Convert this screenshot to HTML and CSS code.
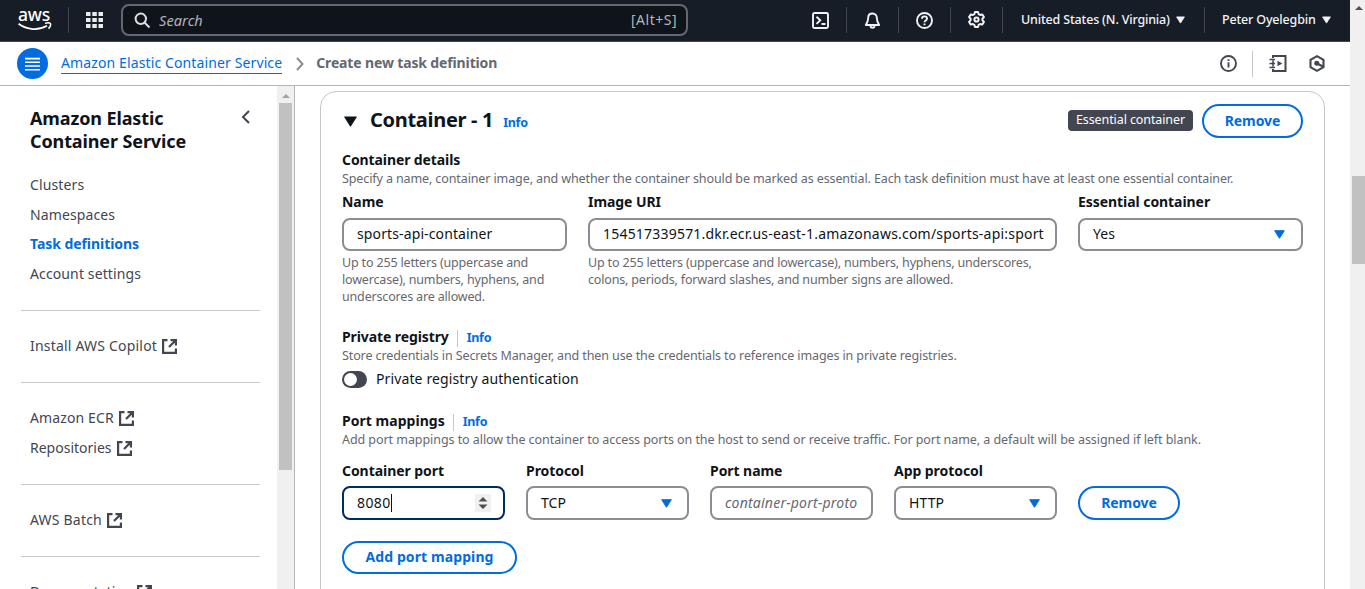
FILE: index.html
```
<!DOCTYPE html>
<html lang="en">
<head>
<meta charset="utf-8">
<title>Create new task definition</title>
<link rel="stylesheet" href="styles.css">
</head>
<body>
<svg width="0" height="0" class="defs">
  <symbol id="ext" viewBox="0 0 15 15"><path d="M5.500 1.100H1.100v12.800h12.800V9.500M8.500 1.100h5.400v5.400M13.500 1.500L7 8" fill="none" stroke="currentColor" stroke-width="2.200"/></symbol>
  <symbol id="caret" viewBox="0 0 11 9"><path d="M.7.7h9.600L5.500 8.300z" fill="currentColor" stroke="currentColor" stroke-width="1" stroke-linejoin="round"/></symbol>
</svg>
<div class="app">
  <div class="page">
    <header class="topbar">
      <div class="logo">
        <span class="logo-text">aws</span>
        <svg width="34" height="9" viewBox="0 0 34 9" fill="none" stroke="#fff"><path d="M.5 1.800c8.500 6.300 20 7 28.500 2" stroke-width="1.800"/><path d="M27 1.400c2-.7 4.200-.7 5.300-.1.500 1-.1 3.600-1.800 5.300" stroke-width="1.500"/></svg>
      </div>
      <i class="vr vr-logo"></i>
      <svg class="apps" width="17" height="16" viewBox="0 0 17 16" fill="#e9ebed"><path d="M0 0h4.500v4H0zM6.300 0h4.500v4H6.300zM12.500 0H17v4h-4.500zM0 6h4.500v4H0zM6.300 6h4.500v4H6.300zM12.500 6H17v4h-4.500zM0 12h4.500v4H0zM6.300 12h4.500v4H6.300zM12.500 12H17v4h-4.500z"/></svg>
      <div class="search">
        <svg width="17" height="17" viewBox="0 0 17 17" fill="none" stroke="#dedee3" stroke-width="2"><circle cx="6.800" cy="6.800" r="5.200"/><path d="M10.500 10.500l5 5"/></svg>
        <span class="search-ph">Search</span>
        <span class="search-key">[Alt+S]</span>
      </div>
      <div class="tools">
        <div class="tool"><svg width="17" height="17" viewBox="0 0 17 17" fill="none" stroke="#f3f3f7" stroke-width="1.900"><rect x="1" y="1" width="15" height="15" rx="1.500"/><path d="M4.500 4.700l3.800 3.600-3.800 3.600M9.500 12h4"/></svg></div>
        <div class="tool"><svg width="17" height="17" viewBox="0 0 17 17" fill="none" stroke="#f3f3f7" stroke-width="1.900"><path d="M8.500 1.500c-2.900 0-4.300 2-4.300 4.300 0 3.200-.7 4.700-2.400 7.200h13.400c-1.700-2.500-2.400-4-2.400-7.200 0-2.300-1.400-4.300-4.300-4.300z" stroke-linejoin="round"/><path d="M6.500 13.500c0 3 4 3 4 0"/></svg></div>
        <div class="tool"><svg width="17" height="17" viewBox="0 0 17 17" fill="none" stroke="#f3f3f7" stroke-width="1.900"><circle cx="8.500" cy="8.500" r="7.500"/><path d="M6 6.700c0-3.100 5-3.100 5 0 0 1.700-2.500 1.800-2.500 3.600M8.500 11.500v1.700"/></svg></div>
        <div class="tool"><svg class="gear" width="17" height="17" viewBox="0 0 17 17" fill="none" stroke="#f3f3f7" stroke-width="2" stroke-linejoin="round"><path d="M7 1h3l.6 2.100 1.500.9 2.200-.6 1.600 2.700L14.400 7.700v1.600l1.500 1.600-1.600 2.700-2.200-.6-1.500.9L10 16H7l-.6-2.100-1.500-.9-2.200.6-1.600-2.700 1.500-1.600V7.700L1.100 6.100l1.600-2.700 2.200.6 1.500-.9z"/><circle cx="8.500" cy="8.500" r="2.100"/></svg></div>
      </div>
      <div class="menu region"><span>United States (N. Virginia)</span><svg class="mini" width="9" height="8"><use href="#caret"/></svg></div>
      <i class="vr"></i>
      <div class="menu user"><span>Peter Oyelegbin</span><svg class="mini" width="9" height="8"><use href="#caret"/></svg></div>
    </header>

    <nav class="crumbs">
      <div class="burger"><svg width="15" height="14" viewBox="0 0 15 14" fill="#fff"><path d="M0 .8h15v1.600H0zM0 4.500h15v1.600H0zM0 8.200h15v1.600H0zM0 12h15v1.600H0z"/></svg></div>
      <a class="crumb-link">Amazon Elastic Container Service</a>
      <svg class="crumb-sep" width="8" height="14" viewBox="0 0 8 14" fill="none" stroke="#8c8c94" stroke-width="2"><path d="M1 1l5.500 6L1 13"/></svg>
      <span class="crumb-current">Create new task definition</span>
      <div class="crumb-tools">
        <svg width="17" height="17" viewBox="0 0 17 17" fill="none" stroke="#424650" stroke-width="1.900"><circle cx="8.500" cy="8.500" r="7.500"/><path d="M8.500 7.300v5.200M8.500 4.300v1.800"/></svg>
        <i class="vr-light"></i>
        <svg width="18" height="17" viewBox="0 0 18 17" fill="none" stroke="#424650" stroke-width="2"><path d="M4 3V1h12.500v15H4v-2"/><path d="M4 5.500v6M.5 4.500h5.500M.5 8.500h5.500M.5 12.500h5.500" stroke-width="1.600"/><path d="M8.500 5.800v5.400l4.800-2.700z" fill="#424650" stroke="none"/></svg>
        <svg class="hex" width="16" height="17" viewBox="0 0 16 17" fill="none" stroke="#424650" stroke-width="2.100"><path d="M8 1.200l6.500 3.600v7.400L8 15.800l-6.500-3.600V4.800z"/><circle cx="7.800" cy="8.200" r="2.500" fill="#424650" stroke="none"/><path d="M8 8.500l6 3"/></svg>
      </div>
    </nav>

    <div class="body">
      <aside class="side">
        <div class="side-content">
          <div class="side-head">
            <h2>Amazon Elastic<br>Container Service</h2>
            <svg width="9" height="14" viewBox="0 0 9 14" fill="none" stroke="#424650" stroke-width="2"><path d="M8 1L2 7l6 6"/></svg>
          </div>
          <ul class="links">
            <li>Clusters</li>
            <li>Namespaces</li>
            <li class="active">Task definitions</li>
            <li>Account settings</li>
          </ul>
          <ul class="links ruled"><li class="wide">Install AWS Copilot<svg class="ext"><use href="#ext"/></svg></li></ul>
          <ul class="links ruled"><li>Amazon ECR<svg class="ext"><use href="#ext"/></svg></li><li class="tight">Repositories<svg class="ext"><use href="#ext"/></svg></li></ul>
          <ul class="links ruled"><li class="wide">AWS Batch<svg class="ext"><use href="#ext"/></svg></li></ul>
          <ul class="links ruled"><li class="tight">Documentation<svg class="ext"><use href="#ext"/></svg></li></ul>
        </div>
        <div class="side-scroll"><i class="arrow-up dim"></i><i class="thumb"></i></div>
      </aside>

      <main class="main">
        <section class="card">
          <div class="card-head">
            <svg class="fold" width="13" height="11"><use href="#caret"/></svg>
            <h1>Container - 1</h1>
            <a class="info">Info</a>
            <span class="badge">Essential container</span>
            <button class="btn btn-remove">Remove</button>
          </div>

          <h3 class="sub details">Container details</h3>
          <p class="hint">Specify a name, container image, and whether the container should be marked as essential. Each task definition must have at least one essential container.</p>
          <div class="grid detail-grid">
            <div class="field"><label>Name</label><div class="input"><span>sports-api-container</span></div><p class="hint">Up to 255 letters (uppercase and<br>lowercase), numbers, hyphens, and<br>underscores are allowed.</p></div>
            <div class="field"><label>Image URI</label><div class="input"><span class="uri">154517339571.dkr.ecr.us-east-1.amazonaws.com/sports-api:sport</span></div><p class="hint">Up to 255 letters (uppercase and lowercase), numbers, hyphens, underscores,<br>colons, periods, forward slashes, and number signs are allowed.</p></div>
            <div class="field"><label>Essential container</label><div class="input select"><span>Yes</span><svg class="caret" width="11" height="9"><use href="#caret"/></svg></div></div>
          </div>

          <div class="sub-row"><h3 class="sub">Private registry</h3><a class="info split">Info</a></div>
          <p class="hint">Store credentials in Secrets Manager, and then use the credentials to reference images in private registries.</p>
          <div class="toggle-row"><i class="toggle"></i><span>Private registry authentication</span></div>

          <div class="sub-row ports"><h3 class="sub">Port mappings</h3><a class="info split">Info</a></div>
          <p class="hint port-hint">Add port mappings to allow the container to access ports on the host to send or receive traffic. For port name, a default will be assigned if left blank.</p>
          <div class="grid port-grid">
            <div class="field"><label>Container port</label><div class="input focus"><span class="typed">8080</span><div class="spin"><svg width="10" height="12" viewBox="0 0 10 12" fill="#505050"><path d="M5 0l4.500 4.500h-9zM5 12l4.500-4.500h-9z"/></svg></div></div></div>
            <div class="field"><label>Protocol</label><div class="input select"><span>TCP</span><svg class="caret" width="11" height="9"><use href="#caret"/></svg></div></div>
            <div class="field"><label>Port name</label><div class="input"><span class="ph">container-port-proto</span></div></div>
            <div class="field"><label>App protocol</label><div class="input select"><span>HTTP</span><svg class="caret" width="11" height="9"><use href="#caret"/></svg></div></div>
            <button class="btn">Remove</button>
          </div>
          <button class="btn btn-add">Add port mapping</button>
        </section>
      </main>
    </div>
  </div>
  <div class="page-scroll"><i class="arrow-up"></i><i class="thumb"></i></div>
</div>
</body>
</html>
```
FILE: styles.css
```
* { box-sizing: border-box; }
body { margin: 0; overflow: hidden; background: #fff; color: #0f141a; font: 14px/20px "Noto Sans", "Open Sans", sans-serif; letter-spacing: .12px; }
h1, h2, h3, p, ul { margin: 0; padding: 0; }
svg { display: block; flex: none; }
i { display: block; flex: none; }
.defs { display: none; }
.app { display: flex; width: 1365px; height: 589px; overflow: hidden; }
.page { display: flex; flex-direction: column; width: 1350px; }

.topbar { display: flex; align-items: center; height: 42px; padding-bottom: 1px; background: #161d26; border-bottom: 1px solid #424650; color: #f3f3f7; flex: none; }
.logo { width: 34px; height: 23px; margin: 0 0 2px 18px; }
.logo-text { display: block; height: 14px; font-size: 17.500px; line-height: 12px; font-weight: 500; letter-spacing: -.2px; color: #fff; }
.vr { width: 1px; height: 26px; background: #424650; }
.vr-logo { margin: 0 17px 0 16px; }
.search { display: flex; align-items: center; width: 567px; height: 32px; margin-left: 18px; padding: 0 9px 0 11px; border: 2px solid #656871; border-radius: 8px; background: #0f141a; color: #b4b4bb; }
.search-ph { margin: 0 0 1px 8px; font-style: italic; font-size: 14.500px; letter-spacing: .1px; }
.search-key { margin: 0 0 1px auto; letter-spacing: .5px; }
.tools { display: flex; margin-left: 107px; }
.tool { display: flex; align-items: center; justify-content: center; width: 52px; height: 26px; border-right: 1px solid #424650; }
.gear { margin-bottom: 1px; }
.menu { display: flex; align-items: center; font-weight: 500; font-size: 12.500px; letter-spacing: -.17px; white-space: nowrap; }
.region { width: 201px; padding-left: 18px; }
.user { padding-left: 17px; }
.mini { margin-left: 6px; }

.crumbs { display: flex; align-items: center; height: 44px; padding: 0 25px 0 17px; border-bottom: 1px solid #b4b4b4; flex: none; }
.burger { display: flex; align-items: center; justify-content: center; width: 31px; height: 31px; border-radius: 50%; background: #006ce0; }
.crumb-link { margin-left: 13px; height: 20px; border-bottom: 1px solid #006ce0; color: #006ce0; line-height: 18px; }
.crumb-sep { margin: 0 12px 0 14px; }
.crumb-current { font-weight: 700; color: #656871; letter-spacing: -.14px; margin-bottom: 2px; }
.crumb-tools { display: flex; align-items: center; margin-left: auto; }
.vr-light { width: 1px; height: 26px; margin: 0 16px 0 15px; background: #c6c6cd; }
.hex { margin-left: 22px; }

.body { display: flex; flex: 1; min-height: 0; }
.side { display: flex; width: 295px; border-right: 1px solid #b4b4bb; overflow: hidden; flex: none; }
.side-content { width: 277px; padding: 21px 17px 0 21px; flex: none; }
.side-head { display: flex; justify-content: space-between; padding: 0 10px 17px 9px; }
.side-head h2 { font-size: 18px; line-height: 23px; letter-spacing: -.12px; }
.side-head svg { margin-top: 3px; }
.links { list-style: none; padding: 0 9px 21px; }
.links li { display: flex; align-items: center; height: 30px; color: #424650; }
.links .active { height: 29px; padding-bottom: 1px; color: #006ce0; font-weight: 700; letter-spacing: -.06px; }
.links .wide { letter-spacing: .2px; }
.links .tight { letter-spacing: 0; }
.ruled { border-top: 1px solid #c6c6cd; padding: 20px 9px 21px; }
.ext { width: 15px; height: 15px; margin-left: 5px; }
.side-scroll { display: flex; flex-direction: column; width: 17px; padding: 7px 2px 0; background: #f0f0f0; }
.side-scroll .thumb { width: 13px; height: 367px; margin-top: 5px; background: #c1c1c1; }
.arrow-up { width: 0; height: 0; margin: 0 auto; border: 4px solid transparent; border-top: 0; border-bottom: 4px solid #505050; }
.dim { border-bottom-color: #a3a3a3; margin-top: 1px; }
.page-scroll { width: 15px; padding: 6px 0 0 2px; background: #f0f0f0; }
.page-scroll .arrow-up { margin-left: 3px; }
.page-scroll .thumb { height: 88px; margin-top: 166px; background: #c1c1c1; }

.main { flex: 1; padding: 5px 25px 0; overflow: hidden; }
.card { height: 560px; padding: 12px 21px 0; border: 1px solid #c6c6cd; border-radius: 16px; }
.card-head { display: flex; align-items: center; height: 34px; }
.fold { margin: 0 13px 0 2px; }
.card-head h1 { font-size: 20px; line-height: 24px; letter-spacing: -.3px; margin-bottom: 3px; }
.info { color: #006ce0; font-size: 12.500px; font-weight: 700; letter-spacing: -.3px; }
.card-head .info { margin: 3px 0 0 10px; }
.badge { height: 21px; margin: 0 0 1px auto; padding: 0 8px; border-radius: 4px; background: #424650; color: #fff; font-size: 12.500px; line-height: 19px; letter-spacing: -.1px; }
.btn { height: 34px; width: 102px; padding: 0; border: 2px solid #006ce0; border-radius: 17px; background: #fff; color: #006ce0; font: 700 14px/20px "Noto Sans", "Open Sans", sans-serif; letter-spacing: -.05px; }
.btn-remove { width: 101px; margin-left: 9px; }
.btn-add { display: block; width: 175px; height: 33px; margin-top: 21px; padding-bottom: 2px; letter-spacing: .1px; }
.sub { font-size: 14px; line-height: 20px; font-weight: 700; letter-spacing: -.1px; }
.details { margin-top: 12px; }
.hint { color: #656871; font-size: 12.500px; line-height: 17px; letter-spacing: -.108px; white-space: nowrap; }
.port-hint { letter-spacing: -.06px; }
.grid { display: grid; column-gap: 21px; }
.detail-grid { grid-template-columns: 225px 469px 225px; margin-top: 5px; height: 113px; }
.port-grid { grid-template-columns: repeat(4, 163px) 102px; align-items: end; margin-top: 13px; }
.field { min-width: 0; }
.field label { display: block; margin-bottom: 6px; font-weight: 700; letter-spacing: -.06px; }
.field .hint { margin-top: 3px; letter-spacing: -.165px; }
.input { display: flex; align-items: center; height: 33px; padding: 0 11px 2px 13px; border: 2px solid #8c8c94; border-radius: 8px; white-space: nowrap; }
.input .uri { letter-spacing: .205px; }
.port-grid .input { height: 34px; padding-bottom: 0; }
.port-grid label { margin-bottom: 5px; }
.input.select { justify-content: space-between; padding-right: 15px; }
.caret { color: #006ce0; }
.detail-grid .caret { margin: 2px 1px 0 0; }
.input.focus { border-color: #002b66; justify-content: space-between; padding-right: 12px; }
.typed { border-right: 1px solid #0f141a; height: 18px; line-height: 18px; letter-spacing: .4px; }
.input .ph { font-style: italic; color: #656871; letter-spacing: .22px; }
.spin { display: flex; align-items: center; justify-content: center; width: 16px; height: 18px; background: #f0f0f0; }
.sub-row { display: flex; align-items: center; margin-top: 22px; height: 20px; }
.ports .sub { letter-spacing: .03px; }
.split { margin-left: 8px; padding-left: 9px; border-left: 1px solid #c6c6cd; height: 17px; line-height: 15px; margin-top: 3px; }
.toggle-row { display: flex; align-items: center; gap: 9px; height: 20px; margin-top: 5px; }
.toggle { width: 25px; height: 17px; padding: 2px; border-radius: 9px; background: #424650; margin-top: 1px; }
.toggle::before { content: ""; display: block; width: 13px; height: 13px; border-radius: 50%; background: #fff; }
```
